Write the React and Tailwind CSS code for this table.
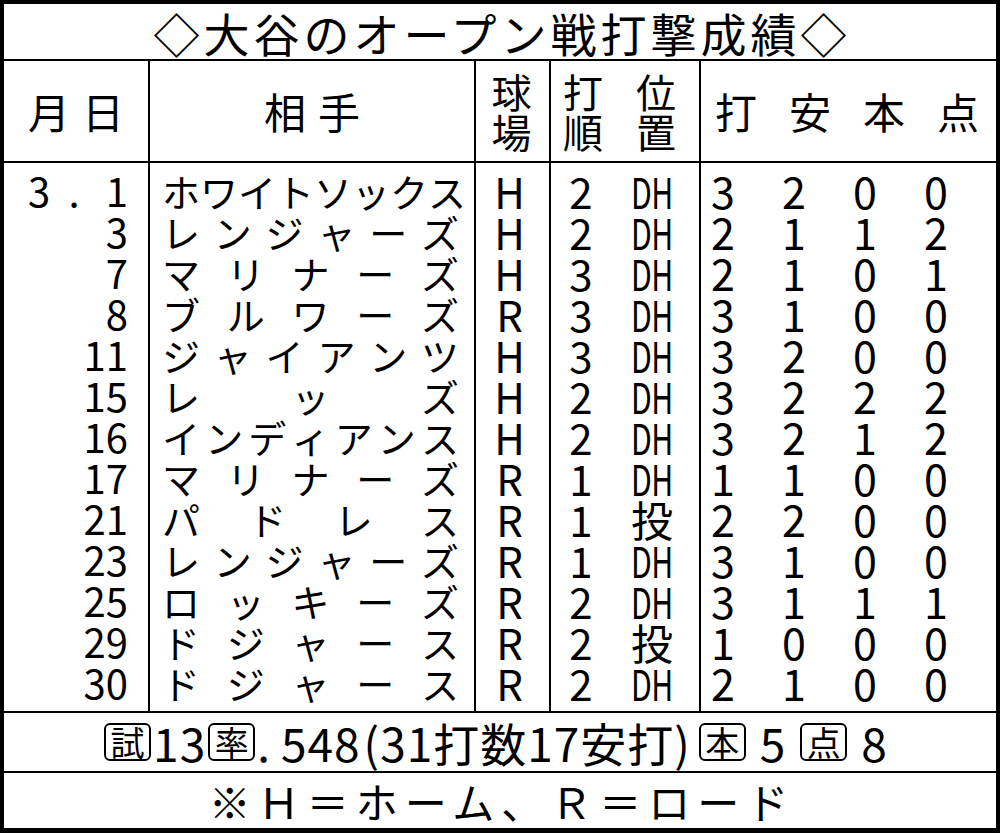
import React from "react";

/* =========================
   DATA
========================= */
const ROWS = [
  ["3", "ホワイトソックス", "H", "2", "DH", "3", "2", "0", "0"],
  ["3", "レンジャーズ", "H", "2", "DH", "2", "1", "1", "2"],
  ["7", "マリナーズ", "H", "3", "DH", "2", "1", "0", "1"],
  ["8", "ブルワーズ", "R", "3", "DH", "3", "1", "0", "0"],
  ["11", "ジャイアンツ", "H", "3", "DH", "3", "2", "0", "0"],
  ["15", "レッズ", "H", "2", "DH", "3", "2", "2", "2"],
  ["16", "インディアンス", "H", "2", "DH", "3", "2", "1", "2"],
  ["17", "マリナーズ", "R", "1", "DH", "1", "1", "0", "0"],
  ["21", "パドレス", "R", "1", "投", "2", "2", "0", "0"],
  ["23", "レンジャーズ", "R", "1", "DH", "3", "1", "0", "0"],
  ["25", "ロッキーズ", "R", "2", "DH", "3", "1", "1", "1"],
  ["29", "ドジャース", "R", "2", "投", "1", "0", "0", "0"],
  ["30", "ドジャース", "R", "2", "DH", "2", "1", "0", "0"]
];

function Boxed({ children }) {
  return (
    <span className="inline-flex items-center justify-center w-[47px] h-[38px] border-2 border-black rounded-[6px] text-[34px] leading-none tracking-normal mx-[2px]">
      {children}
    </span>
  );
}

function Pos({ value }) {
  if (value === "DH") {
    return (
      <span className="inline-block scale-x-[0.72] tracking-[-1px]">DH</span>
    );
  }
  return <span>{value}</span>;
}

export default function App() {
  return (
    <div className="w-[1000px] h-[833px] bg-white text-black border-x-4 border-t-4 border-b-[5px] border-black flex flex-col font-['Noto_Sans_CJK_JP',sans-serif] overflow-hidden">
      {/* TITLE */}
      <div className="h-[57px] shrink-0 border-b-2 border-black flex items-center justify-center text-[46px] leading-none tracking-[4px] pl-[4px]">
        ◇大谷のオープン戦打撃成績◇
      </div>

      {/* HEADER */}
      <div className="h-[102px] shrink-0 border-b-2 border-black flex">
        <div className="w-[146px] shrink-0 border-r-2 border-black flex items-center justify-center gap-[12px] text-[42px] leading-none">
          <span>月</span>
          <span>日</span>
        </div>
        <div className="w-[326px] shrink-0 border-r-2 border-black flex items-center justify-center gap-[12px] text-[42px] leading-none">
          <span>相</span>
          <span>手</span>
        </div>
        <div className="w-[75px] shrink-0 border-r-2 border-black flex flex-col items-center justify-center text-[40px] leading-[40px] pr-[2px]">
          <span>球</span>
          <span>場</span>
        </div>
        <div className="w-[150px] shrink-0 border-r-2 border-black flex items-center text-[40px] leading-[40px]">
          <div className="w-[66px] flex flex-col items-center pl-[2px]">
            <span>打</span>
            <span>順</span>
          </div>
          <div className="w-[92px] flex flex-col items-center">
            <span>位</span>
            <span>置</span>
          </div>
        </div>
        <div className="flex-1 flex items-center pl-[11px] gap-[26px] text-[42px] leading-none">
          <span className="w-[48px] text-center">打</span>
          <span className="w-[48px] text-center">安</span>
          <span className="w-[48px] text-center">本</span>
          <span className="w-[48px] text-center">点</span>
        </div>
      </div>

      {/* DATA */}
      <div className="h-[550px] shrink-0 border-b-2 border-black flex">
        {/* 月日 */}
        <div className="w-[146px] shrink-0 border-r-2 border-black pt-[7px] pb-[8px] pl-[24px] pr-[20px] text-[40px] leading-[41px]">
          {ROWS.map((r, i) =>
            i === 0 ? (
              <div key={i} className="h-[41px] flex justify-between">
                <span>3</span>
                <span className="-ml-[8px]">.</span>
                <span>1</span>
              </div>
            ) : (
              <div key={i} className="h-[41px] text-right">
                {r[0]}
              </div>
            )
          )}
        </div>

        {/* 相手 */}
        <div className="w-[326px] shrink-0 border-r-2 border-black pt-[7px] pb-[8px] pl-[12px] pr-[15px] text-[38px] leading-[41px]">
          {ROWS.map((r, i) => (
            <div key={i} className="h-[41px] flex justify-between">
              {Array.from(r[1]).map((ch, j) => (
                <span key={j}>{ch}</span>
              ))}
            </div>
          ))}
        </div>

        {/* 球場 */}
        <div className="w-[75px] shrink-0 border-r-2 border-black pt-[7px] pb-[8px] pr-[6px] text-[42px] leading-[41px] text-center">
          {ROWS.map((r, i) => (
            <div key={i} className="h-[41px]">
              {r[2]}
            </div>
          ))}
        </div>

        {/* 打順 / 位置 */}
        <div className="w-[150px] shrink-0 border-r-2 border-black pt-[7px] pb-[8px] text-[42px] leading-[41px]">
          {ROWS.map((r, i) => (
            <div key={i} className="h-[41px] flex">
              <span className="w-[60px] text-center">{r[3]}</span>
              <span className="w-[82px] text-center">
                <Pos value={r[4]} />
              </span>
            </div>
          ))}
        </div>

        {/* 打 安 本 点 */}
        <div className="flex-1 pt-[7px] pb-[8px] text-[43px] leading-[41px]">
          {ROWS.map((r, i) => (
            <div key={i} className="h-[41px] flex gap-[27px]">
              <span className="w-[44px] text-center">{r[5]}</span>
              <span className="w-[44px] text-center">{r[6]}</span>
              <span className="w-[44px] text-center">{r[7]}</span>
              <span className="w-[44px] text-center">{r[8]}</span>
            </div>
          ))}
        </div>
      </div>

      {/* SUMMARY */}
      <div className="h-[60px] shrink-0 border-b-2 border-black flex items-center justify-center text-[46px] leading-none tracking-[1px] pr-[10px]">
        <Boxed>試</Boxed>
        <span>13</span>
        <Boxed>率</Boxed>
        <span>.</span>
        <span className="ml-[10px]">548</span>
        <span className="ml-[3px]">(</span>
        <span>31打数17安打</span>
        <span className="mr-[6px]">)</span>
        <Boxed>本</Boxed>
        <span className="mx-[12px]">5</span>
        <Boxed>点</Boxed>
        <span className="ml-[12px]">8</span>
      </div>

      {/* NOTE */}
      <div className="flex-1 flex items-center justify-center text-[42px] leading-none tracking-[7px] pl-[4px]">
        ※Ｈ＝ホーム、Ｒ＝ロード
      </div>
    </div>
  );
}
